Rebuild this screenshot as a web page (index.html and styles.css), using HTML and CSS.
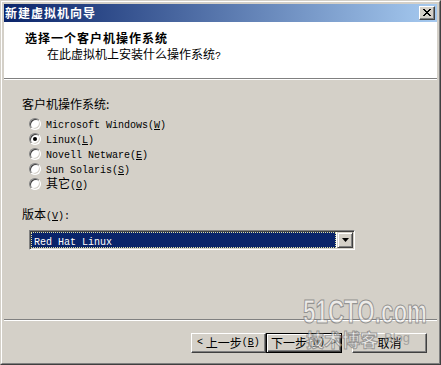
FILE: index.html
```html
<!DOCTYPE html>
<html>
<head>
<meta charset="utf-8">
<link rel="stylesheet" href="styles.css">
</head>
<body>
<div class="window">
  <div class="frame">
    <div class="titlebar">
      <span class="title">新建虚拟机向导</span>
      <div class="close">
        <svg width="8" height="7" viewBox="0 0 8 7"><path d="M0 0h2v1h1v1h2V1h1V0h2v1H7v1H6v1H5v1h1v1h1v1h1v1H6V6H5V5H3v1H2v1H0V6h1V5h1V4h1V3H2V2H1V1H0z" fill="#000"/></svg>
      </div>
    </div>
    <div class="header">
      <div class="h-title">选择一个客户机操作系统</div>
      <div class="h-sub">在此虚拟机上安装什么操作系统<span class="lat">?</span></div>
    </div>
    <div class="body">
      <div class="label">客户机操作系统:</div>
      <div class="radios">
        <div class="radio"><span class="dot"></span><span class="rl"><span class="lat">Microsoft Windows(<u>W</u>)</span></span></div>
        <div class="radio"><span class="dot on"></span><span class="rl"><span class="lat">Linux(<u>L</u>)</span></span></div>
        <div class="radio"><span class="dot"></span><span class="rl"><span class="lat">Novell Netware(<u>E</u>)</span></span></div>
        <div class="radio"><span class="dot"></span><span class="rl"><span class="lat">Sun Solaris(<u>S</u>)</span></span></div>
        <div class="radio"><span class="dot"></span><span class="rl">其它<span class="lat">(<u>O</u>)</span></span></div>
      </div>
      <div class="label ver">版本<span class="lat">(<u>V</u>):</span></div>
      <div class="combo">
        <div class="combo-sel"><span class="lat">Red Hat Linux</span></div>
        <div class="combo-btn">
          <svg width="7" height="4" viewBox="0 0 7 4"><path d="M0 0h7L3.5 4z" fill="#000"/></svg>
        </div>
      </div>
    </div>
    <div class="footer">
      <div class="sep"></div>
      <div class="buttons">
        <div class="btn"><span class="lat">&lt;</span>&nbsp;上一步<span class="lat">(<u>B</u>)</span></div>
        <div class="btn def">下一步<span class="lat">(<u>N</u>) &gt;</span></div>
        <div class="btn cancel">取消</div>
      </div>
    </div>
    <div class="watermark">
      <svg class="wm-big" width="130" height="30" viewBox="0 0 130 30"><text x="1" y="17.3" transform="scale(1,1.5)" textLength="124" lengthAdjust="spacingAndGlyphs">51CTO.com</text></svg>
      <div class="wm-row"><span class="wm-cn">技术博客</span><span class="wm-blog">Blog</span></div>
    </div>
  </div>
</div>
</body>
</html>
```

FILE: styles.css
```css
html, body {
  margin: 0;
  padding: 0;
  background: #d4d0c8;
}
body {
  font-family: "Noto Sans CJK SC", "Liberation Sans", sans-serif;
  font-size: 12px;
  color: #000;
}
.lat {
  font-family: "Liberation Mono", "DejaVu Sans Mono", monospace;
  font-size: 10px;
}
u { text-decoration: underline; text-underline-offset: 1px; }
.window {
  width: 441px;
  height: 365px;
  box-sizing: border-box;
  border: 1px solid;
  border-color: #d4d0c8 #404040 #404040 #d4d0c8;
  background: #d4d0c8;
  overflow: hidden;
}
.frame {
  position: relative;
  height: 100%;
  box-sizing: border-box;
  border: 1px solid;
  border-color: #fff #808080 #808080 #fff;
  padding: 2px;
  display: flex;
  flex-direction: column;
  overflow: hidden;
}
.titlebar {
  height: 18px;
  background: linear-gradient(to right, #0a246a, #a6caf0);
  display: flex;
  align-items: center;
  justify-content: space-between;
  padding: 0 2px 0 1px;
}
.title {
  color: #fff;
  font-weight: bold;
  font-size: 12px;
  letter-spacing: 1px;
  line-height: 18px;
}
.close {
  width: 16px;
  height: 14px;
  box-sizing: border-box;
  background: #d4d0c8;
  border: 1px solid;
  border-color: #fff #404040 #404040 #fff;
  box-shadow: inset -1px -1px #808080;
  display: flex;
  align-items: center;
  justify-content: center;
  padding: 0 1px 1px 0;
}
.close svg { display: block; }
.header {
  height: 57px;
  box-sizing: border-box;
  background: #fff;
  border-bottom: 1px solid #808080;
  box-shadow: 0 1px 0 #fff;
  margin-bottom: 1px;
  padding: 8px 0 0 21px;
}
.h-title {
  font-weight: bold;
  letter-spacing: 1px;
  line-height: 15px;
}
.h-sub {
  line-height: 15px;
  margin: 1px 0 0 22px;
}
.body {
  flex: 1;
  padding: 16px 0 0 18px;
}
.label {
  line-height: 15px;
}
.radios {
  margin: 5px 0 0 7px;
}
.radio {
  height: 15px;
  display: flex;
  align-items: center;
  line-height: 15px;
}
.rl {
  margin-left: 5px;
}
.dot {
  width: 12px;
  height: 12px;
  box-sizing: border-box;
  border-radius: 50%;
  background: #fff;
  border: 1px solid;
  border-color: #808080 #fff #fff #808080;
  box-shadow: inset 1px 1px #404040, inset -1px -1px #d4d0c8;
  position: relative;
  flex: none;
}
.dot.on::after {
  content: "";
  position: absolute;
  left: 3px;
  top: 3px;
  width: 4px;
  height: 4px;
  border-radius: 50%;
  background: #000;
}
.label.ver {
  margin-top: 15px;
}
.combo {
  margin: 6px 0 0 7px;
  width: 326px;
  height: 20px;
  box-sizing: border-box;
  border: 1px solid;
  border-color: #808080 #fff #fff #808080;
  display: flex;
  padding: 1px;
  box-shadow: inset 1px 1px #404040, inset -1px -1px #d4d0c8;
  background: #fff;
}
.combo-sel {
  flex: 1;
  background: #0a246a;
  outline: 1px dotted #e0e0a0;
  outline-offset: -1px;
  margin-right: 1px;
  color: #fff;
  line-height: 16px;
  padding-left: 3px;
}
.combo-btn {
  width: 16px;
  height: 16px;
  box-sizing: border-box;
  background: #d4d0c8;
  border: 1px solid;
  border-color: #d4d0c8 #404040 #404040 #d4d0c8;
  box-shadow: inset 1px 1px #fff, inset -1px -1px #808080;
  display: flex;
  align-items: center;
  justify-content: center;
}
.combo-btn svg { display: block; }
.footer {
  height: 42px;
  box-sizing: border-box;
}
.sep {
  height: 1px;
  background: #808080;
  border-bottom: 1px solid #fff;
}
.buttons {
  display: flex;
  justify-content: flex-end;
  padding: 12px 10px 0 0;
}
.btn {
  width: 75px;
  height: 20px;
  box-sizing: border-box;
  background: #d4d0c8;
  border: 1px solid;
  border-color: #fff #404040 #404040 #fff;
  box-shadow: inset -1px -1px #808080;
  display: flex;
  align-items: center;
  justify-content: center;
  line-height: 18px;
  white-space: pre;
}
.btn.def {
  width: 76px;
  border: 1px solid #000;
  box-shadow: inset 1px 1px #fff, inset -1px -1px #404040, inset -2px -2px #808080;
}
.btn.cancel {
  margin-left: 10px;
}
.watermark {
  position: absolute;
  left: 300px;
  top: 295px;
  width: 132px;
  pointer-events: none;
}
.wm-big {
  display: block;
}
.wm-big text {
  font-family: "Liberation Sans", sans-serif;
  font-weight: bold;
  font-size: 22.3px;
  fill: rgba(255, 255, 255, 0.6);
  stroke: rgba(120, 120, 120, 0.75);
  stroke-width: 0.8px;
}
.wm-row {
  display: flex;
  align-items: flex-start;
  margin-top: 1px;
}
.wm-cn {
  font-weight: bold;
  font-size: 18px;
  line-height: 22px;
  margin-left: 4px;
  white-space: nowrap;
  color: rgba(255, 255, 255, 0.55);
  -webkit-text-stroke: 1px rgba(120, 120, 120, 0.7);
}
.wm-blog {
  font-family: "Liberation Sans", sans-serif;
  font-size: 13px;
  line-height: 13px;
  margin: 3px 0 0 6px;
  color: rgba(140, 140, 140, 0.7);
}
```
